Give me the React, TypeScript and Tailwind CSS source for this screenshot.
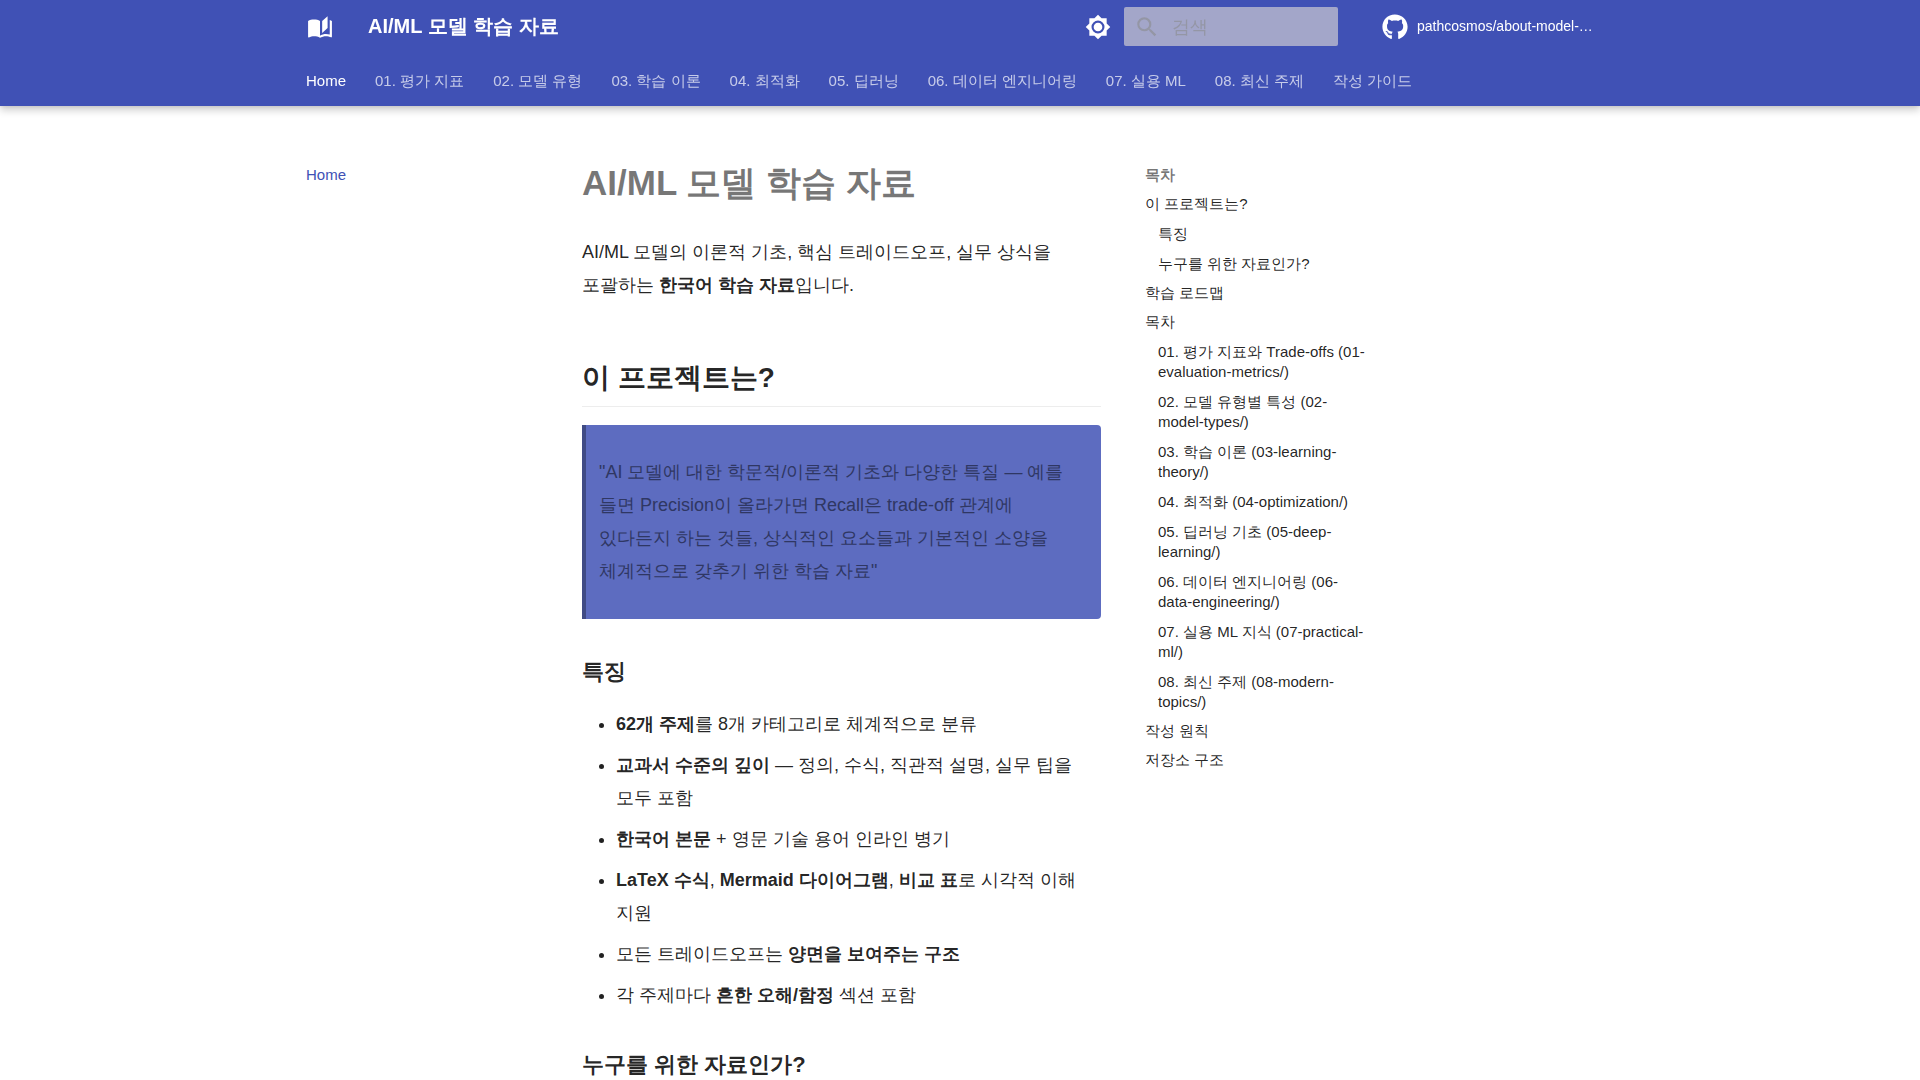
import type { ReactNode } from 'react';
import { FaGithub } from 'react-icons/fa';

type TocItem = {
    label: string;
    children?: string[];
};

const TABS = [
    'Home',
    '01. 평가 지표',
    '02. 모델 유형',
    '03. 학습 이론',
    '04. 최적화',
    '05. 딥러닝',
    '06. 데이터 엔지니어링',
    '07. 실용 ML',
    '08. 최신 주제',
    '작성 가이드'
];

const TOC: TocItem[] = [
    { label: '이 프로젝트는?', children: ['특징', '누구를 위한 자료인가?'] },
    { label: '학습 로드맵' },
    {
        label: '목차',
        children: [
            '01. 평가 지표와 Trade-offs (01-evaluation-metrics/)',
            '02. 모델 유형별 특성 (02-model-types/)',
            '03. 학습 이론 (03-learning-theory/)',
            '04. 최적화 (04-optimization/)',
            '05. 딥러닝 기초 (05-deep-learning/)',
            '06. 데이터 엔지니어링 (06-data-engineering/)',
            '07. 실용 ML 지식 (07-practical-ml/)',
            '08. 최신 주제 (08-modern-topics/)'
        ]
    },
    { label: '작성 원칙' },
    { label: '저장소 구조' }
];

const FEATURES: ReactNode[] = [
    <><strong>62개 주제</strong>를 8개 카테고리로 체계적으로 분류</>,
    <><strong>교과서 수준의 깊이</strong> — 정의, 수식, 직관적 설명, 실무 팁을 모두 포함</>,
    <><strong>한국어 본문</strong> + 영문 기술 용어 인라인 병기</>,
    <><strong>LaTeX 수식</strong>, <strong>Mermaid 다이어그램</strong>, <strong>비교 표</strong>로 시각적 이해 지원</>,
    <>모든 트레이드오프는 <strong>양면을 보여주는 구조</strong></>,
    <>각 주제마다 <strong>흔한 오해/함정</strong> 섹션 포함</>
];

function Icon({ d, className }: { d: string; className?: string }) {
    return (
        <svg viewBox="0 0 24 24" fill="currentColor" aria-hidden="true" className={className}>
            <path d={d} />
        </svg>
    );
}

const BOOK = 'm19 2-5 4.5v11l5-4.5V2M6.5 5C4.55 5 2.45 5.4 1 6.5v14.66c0 .25.25.5.5.5.1 0 .15-.07.25-.07 1.35-.65 3.3-1.09 4.75-1.09 1.95 0 4.05.4 5.5 1.5 1.35-.85 3.8-1.5 5.5-1.5 1.65 0 3.35.31 4.75 1.06.1.05.15.03.25.03.25 0 .5-.25.5-.5V6.5c-.6-.45-1.25-.75-2-1V19c-1.1-.35-2.3-.5-3.5-.5-1.7 0-4.15.65-5.5 1.5V6.5C10.55 5.4 8.45 5 6.5 5Z';
const SUN = 'M12 8a4 4 0 0 0-4 4 4 4 0 0 0 4 4 4 4 0 0 0 4-4 4 4 0 0 0-4-4m0 10a6 6 0 0 1-6-6 6 6 0 0 1 6-6 6 6 0 0 1 6 6 6 6 0 0 1-6 6m8-9.31V4h-4.69L12 .69 8.69 4H4v4.69L.69 12 4 15.31V20h4.69L12 23.31 15.31 20H20v-4.69L23.31 12z';
const MAGNIFY = 'M9.5 3A6.5 6.5 0 0 1 16 9.5c0 1.61-.59 3.09-1.56 4.23l.27.27h.79l5 5-1.5 1.5-5-5v-.79l-.27-.27A6.52 6.52 0 0 1 9.5 16 6.5 6.5 0 0 1 3 9.5 6.5 6.5 0 0 1 9.5 3m0 2C7 5 5 7 5 9.5S7 14 9.5 14 14 12 14 9.5 12 5 9.5 5';

function Header() {
    return (
        <header className="sticky top-0 z-10 bg-[#4051b5] text-white shadow-[0_0_4px_rgba(0,0,0,0.1),0_4px_8px_rgba(0,0,0,0.2)]">
            <div className="mx-auto flex h-[53px] max-w-[1342px] items-center px-4">
                <a href="#" aria-label="AI/ML 모델 학습 자료" className="p-0.5">
                    <Icon d={BOOK} className="size-[26px]" />
                </a>
                <div className="ml-[33px] flex-1 truncate pb-0.5 text-xl font-bold">AI/ML 모델 학습 자료</div>
                <button type="button" aria-label="다크 모드로 전환" className="mr-[13px]">
                    <Icon d={SUN} className="size-[26px]" />
                </button>
                <label className="flex h-[39px] w-[214px] items-center gap-3 rounded-xs bg-[#a3a6c9] px-2.5 text-[#9496a5]">
                    <Icon d={MAGNIFY} className="size-[26px] shrink-0" />
                    <input
                        type="text"
                        placeholder="검색"
                        aria-label="검색"
                        className="w-full min-w-0 bg-transparent text-lg outline-none placeholder:text-[#9496a5]"
                    />
                </label>
                <a href="#" className="ml-11 flex w-[233px] items-center gap-[9px]">
                    <FaGithub className="size-[26px] shrink-0" />
                    <span className="pb-0.5 text-sm whitespace-nowrap">pathcosmos/about-model-…</span>
                </a>
            </div>
            <nav aria-label="탭" className="mx-auto flex h-[53px] max-w-[1342px] items-center gap-[29px] px-[17px] pt-1 text-[15px]">
                {TABS.map((tab, i) => (
                    <a key={tab} href="#" className={i === 0 ? 'whitespace-nowrap' : 'whitespace-nowrap text-white/70'}>
                        {tab}
                    </a>
                ))}
            </nav>
        </header>
    );
}

function Toc() {
    return (
        <nav aria-label="목차" className="w-[266px] shrink-0 pt-[27px] pr-6 pl-[18px] text-[15px] leading-5">
            <div className="font-bold text-black/54">목차</div>
            <ul>
                {TOC.map(item => (
                    <li key={item.label}>
                        <a href="#" className="mt-[9px] block">{item.label}</a>
                        {item.children && (
                            <ul className="pl-[13px]">
                                {item.children.map(child => (
                                    <li key={child}>
                                        <a href="#" className="mt-2.5 block">{child}</a>
                                    </li>
                                ))}
                            </ul>
                        )}
                    </li>
                ))}
            </ul>
        </nav>
    );
}

function Article() {
    return (
        <article className="min-w-0 max-w-[572px] flex-1 pt-[21px] pr-[26px] pb-12 pl-[27px] text-lg leading-[33px]">
            <h1 className="mb-[29px] text-[35px] leading-[48px] font-bold text-black/54">AI/ML 모델 학습 자료</h1>
            <p>
                AI/ML 모델의 이론적 기초, 핵심 트레이드오프, 실무 상식을 포괄하는 <strong>한국어 학습 자료</strong>입니다.
            </p>
            <h2 className="mt-14 mb-[18px] border-b border-black/7 pb-2 text-[28px] leading-10 font-bold">이 프로젝트는?</h2>
            <blockquote className="rounded-r border-l-4 border-[#404b85] bg-[#5d6cc0] px-[13px] py-[31px] text-[#2f3763]">
                <p>
                    "AI 모델에 대한 학문적/이론적 기초와 다양한 특질 — 예를 들면 Precision이 올라가면 Recall은 trade-off 관계에 있다든지 하는 것들, 상식적인 요소들과 기본적인 소양을 체계적으로 갖추기 위한 학습 자료"
                </p>
            </blockquote>
            <h3 className="mt-9 mb-5 text-[22px] font-bold">특징</h3>
            <ul className="list-disc space-y-2 pl-[34px]">
                {FEATURES.map((feature, i) => (
                    <li key={i}>{feature}</li>
                ))}
            </ul>
            <h3 className="mt-9 mb-5 text-[22px] font-bold">누구를 위한 자료인가?</h3>
        </article>
    );
}

export default function App() {
    return (
        <div lang="ko" className="h-screen overflow-hidden bg-white font-['Liberation_Sans',sans-serif] break-keep text-black/87">
            <Header />
            <main className="mx-auto flex max-w-[1342px] pt-8">
                <nav aria-label="사이트" className="w-[266px] shrink-0 px-[17px] pt-[27px] text-[15px] leading-5">
                    <a href="#" className="text-[#4051b5]">Home</a>
                </nav>
                <Article />
                <Toc />
            </main>
        </div>
    );
}
